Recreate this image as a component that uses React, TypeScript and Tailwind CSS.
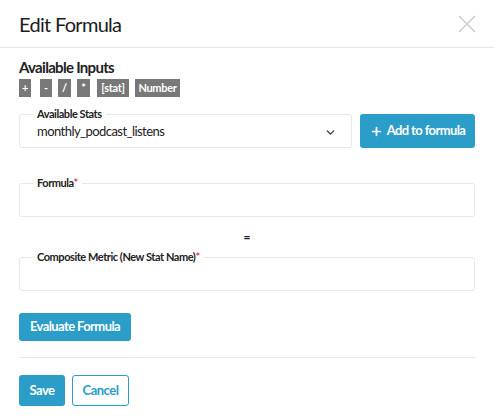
import { ChevronDown, Plus } from "lucide-react"

const inputs = [
  { s: "+", w: "w-[12px]", ml: "ml-0" },
  { s: "-", w: "w-[12px]", ml: "ml-[9px]" },
  { s: "/", w: "w-[13px]", ml: "ml-[6px]" },
  { s: "*", w: "w-[13px]", ml: "ml-[6px]" },
  { s: "[stat]", w: "w-[32px]", ml: "ml-[7px]" },
  { s: "Number", w: "w-[45px]", ml: "ml-[6px]" },
]

function Field({ label, required, children }: { label: string; required?: boolean; children?: React.ReactNode }) {
  return (
    <div className="relative h-[34px] rounded-[3px] border border-[#e8e8e8] bg-white">
      <span className="absolute -top-[8px] left-[13px] bg-white px-[4px] text-[11px] font-bold leading-[14px] tracking-[-0.45px] text-[#222]">
        {label}
        {required && <span className="text-[#d0465a]">*</span>}
      </span>
      {children}
    </div>
  )
}

export default function App() {
  return (
    <div className="h-[420px] w-[494px] bg-white text-[#222]" style={{ fontFamily: "Lato, 'Open Sans', sans-serif" }}>
      <div className="flex h-[48px] items-center justify-between border-b border-[#e6e6e6] pl-[19px] pr-[18px]">
        <h1 className="text-[20px] leading-none tracking-[-0.7px] text-[#1c1c1c]">Edit Formula</h1>
        <svg width="18" height="18" viewBox="0 0 18 18" className="text-[#c8c8c8]">
          <path d="M1 1L17 17M17 1L1 17" stroke="currentColor" strokeWidth="1.2" fill="none" />
        </svg>
      </div>

      <div className="px-[19px] pt-[11px]">
        <h2 className="text-[15px] font-bold leading-[16px] tracking-[-0.7px]">Available Inputs</h2>
        <div className="mt-[4px] flex">
          {inputs.map((c) => (
            <span
              key={c.s}
              className={`${c.w} ${c.ml} flex h-[18px] items-center justify-center bg-[#787878] text-[11px] font-bold tracking-[-0.3px] text-white`}
            >
              {c.s}
            </span>
          ))}
        </div>

        <div className="mt-[17px] flex gap-[8px]">
          <div className="flex-1">
            <Field label="Available Stats">
              <div className="flex h-full items-center justify-between pl-[17px] pr-[14px] pt-[2px]">
                <span className="text-[13px] tracking-[-0.55px]">monthly_podcast_listens</span>
                <ChevronDown className="h-[13px] w-[13px] text-[#333]" strokeWidth={2.4} />
              </div>
            </Field>
          </div>
          <button className="flex h-[34px] w-[115px] items-center justify-center gap-[4px] rounded-[3px] bg-[#2a9dc8] text-[13px] font-bold tracking-[-0.6px] text-white">
            <Plus className="h-[13px] w-[13px]" strokeWidth={3.2} />
            Add to formula
          </button>
        </div>

        <div className="mt-[35px]">
          <Field label="Formula" required />
        </div>

        <div className="mt-[12px] text-center text-[12px] font-bold leading-[16px]">=</div>

        <div className="mt-[12px]">
          <Field label="Composite Metric (New Stat Name)" required />
        </div>

        <button className="mt-[22px] h-[28px] w-[112px] rounded-[3px] bg-[#2a9dc8] text-[13px] font-bold tracking-[-0.6px] text-white">
          Evaluate Formula
        </button>

        <div className="mt-[16px] border-t border-[#e6e6e6]" />

        <div className="mt-[17px] flex gap-[7px]">
          <button className="h-[31px] w-[46px] rounded-[3px] bg-[#2a9dc8] text-[13px] font-bold tracking-[-0.5px] text-white">Save</button>
          <button className="h-[31px] w-[57px] rounded-[3px] border border-[#2a9dc8] bg-white text-[13px] font-bold tracking-[-0.5px] text-[#2a9dc8]">
            Cancel
          </button>
        </div>
      </div>
    </div>
  )
}
